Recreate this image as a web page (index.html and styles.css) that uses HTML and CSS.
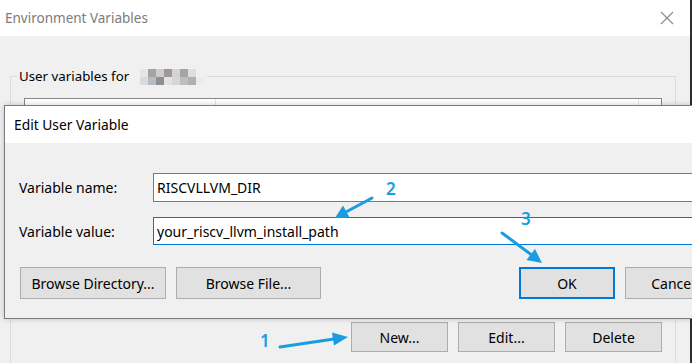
FILE: index.html
```html
<!DOCTYPE html>
<html lang="en">
<head>
    <meta charset="UTF-8">
    <title>Environment Variables</title>
    <link rel="stylesheet" href="styles.css">
</head>
<body>
    <div class="env-window">
        <div class="titlebar">
            <span class="title">Environment Variables</span>
            <svg class="close" width="14" height="14" viewBox="0 0 14 14">
                <path d="M1 1 L13 13 M13 1 L1 13" stroke="#8a8a8a" stroke-width="1.1" fill="none"/>
            </svg>
        </div>
        <div class="env-body">
            <div class="group">
                <div class="group-title">
                    <span>User variables for</span>
                    <!-- blurred user name -->
                    <span class="mosaic">
                        <i style="background:#f0f0f0"></i><i style="background:#e6e6e6"></i><i style="background:#a3a3a6"></i><i style="background:#cfcdcc"></i><i style="background:#a09896"></i><i style="background:#d3d3d3"></i><i style="background:#a2a6a8"></i><i style="background:#dedede"></i><i style="background:#f0f0f0"></i>
                        <i style="background:#f0f0f0"></i><i style="background:#dadada"></i><i style="background:#b8bcc2"></i><i style="background:#899194"></i><i style="background:#e4e2e0"></i><i style="background:#d6d6d6"></i><i style="background:#bdbdbd"></i><i style="background:#b0b0b0"></i><i style="background:#ececec"></i>
                    </span>
                </div>
                <div class="list">
                    <div class="list-head">
                        <div class="col-name"></div>
                        <div class="col-value"></div>
                        <div class="scroll-box"></div>
                    </div>
                </div>
                <div class="list-buttons">
                    <button class="btn">New...</button>
                    <button class="btn">Edit...</button>
                    <button class="btn">Delete</button>
                </div>
            </div>
        </div>
    </div>

    <div class="edit-dialog">
        <div class="dialog-title">Edit User Variable</div>
        <div class="dialog-body">
            <div class="field-row">
                <label class="field-label">Variable name:</label>
                <div class="text-box">RISCVLLVM_DIR</div>
            </div>
            <div class="field-row row-value">
                <label class="field-label">Variable value:</label>
                <div class="text-box focused">your_riscv_llvm_install_path</div>
            </div>
            <div class="dialog-buttons">
                <button class="btn btn-dir">Browse Directory...</button>
                <button class="btn btn-file">Browse File...</button>
                <button class="btn btn-ok">OK</button>
                <button class="btn btn-cancel">Cancel</button>
            </div>
        </div>
    </div>

    <!-- step annotations -->
    <svg class="annotations" width="692" height="363" viewBox="0 0 692 363">
        <g stroke="#1a9de0" stroke-width="3" stroke-linecap="round" fill="none">
            <line x1="372" y1="198" x2="345" y2="212.5"/>
            <line x1="502" y1="233" x2="531" y2="254.5"/>
            <line x1="280" y1="347" x2="334" y2="339"/>
        </g>
        <g fill="#1a9de0">
            <polygon points="335,218 349.5,217.5 343,205.5"/>
            <polygon points="542,263 526.5,260 535,249"/>
            <polygon points="348,337 334,345.5 332,332.5"/>
        </g>
        <g class="step-num" fill="#1a9de0">
            <text x="386" y="195">2</text>
            <text x="521" y="225">3</text>
            <text x="260" y="347">1</text>
        </g>
    </svg>
</body>
</html>
```

FILE: styles.css
```css
body {
    margin: 0;
    width: 692px;
    height: 363px;
    overflow: hidden;
    position: relative;
    font-family: "Noto Sans", "Open Sans", sans-serif;
    font-size: 14px;
    color: #000;
}

/* background window */
.env-window {
    height: 363px;
    overflow: hidden;
    box-sizing: border-box;
    background-color: #f0f0f0;
    border-right: 2px solid #2e2e2e;
}

.titlebar {
    height: 36px;
    background-color: #fff;
    display: flex;
    align-items: center;
    padding-left: 5px;
    padding-right: 16px;
}

.title {
    color: #7b7b7b;
    font-size: 13.5px;
    flex: 1;
}

.env-body {
    padding: 40px 0 0 10px;
}

.group {
    width: 666px;
    box-sizing: border-box;
    border: 1px solid #dcdcdc;
    padding: 0 13px 12px 13px;
}

.group-title {
    display: flex;
    align-items: center;
    width: fit-content;
    height: 20px;
    margin-top: -11px;
    margin-left: -7px;
    padding: 0 3px 0 2px;
    background-color: #f0f0f0;
    font-size: 13.3px;
}

.mosaic {
    display: grid;
    grid-template-columns: repeat(9, 8px);
    grid-template-rows: repeat(2, 8px);
    margin-left: 3px;
    margin-top: 2px;
}

.mosaic i {
    display: block;
}

.list {
    margin-top: 12px;
    height: 202px;
    box-sizing: border-box;
    border: 1px solid #828790;
    background-color: #fff;
}

.list-head {
    display: flex;
    height: 22px;
}

.col-name {
    width: 190px;
    border-right: 1px solid #e5e5e5;
}

.col-value {
    flex: 1;
}

.scroll-box {
    width: 22px;
    border-left: 1px solid #e5e5e5;
    border-bottom: 1px solid #e5e5e5;
}

.list-buttons {
    display: flex;
    justify-content: flex-end;
    gap: 10px;
    margin-top: 22px;
}

.btn {
    height: 30px;
    box-sizing: border-box;
    background-color: #e1e1e1;
    border: 1px solid #adadad;
    font-family: "Noto Sans", "Open Sans", sans-serif;
    font-size: 14px;
    color: #000;
    padding: 0;
}

.list-buttons .btn {
    width: 97px;
}

/* edit dialog on top */
.edit-dialog {
    position: absolute;
    left: 4px;
    top: 105px;
    width: 720px;
    height: 214px;
    box-sizing: border-box;
    border: 1px solid #7a7a7a;
    background-color: #f0f0f0;
    box-shadow: 0 0 6px rgba(0, 0, 0, 0.2);
}

.dialog-title {
    height: 37px;
    background-color: #fff;
    display: flex;
    align-items: center;
    padding-left: 9px;
    font-size: 13.8px;
}

.dialog-body {
    padding: 30px 0 0 14px;
}

.field-row {
    display: flex;
    align-items: center;
    height: 29px;
}

.row-value {
    height: 28px;
    margin-top: 15px;
}

.field-label {
    width: 134px;
}

.text-box {
    width: 560px;
    height: 100%;
    box-sizing: border-box;
    border: 1px solid #7a7a7a;
    background-color: #fff;
    padding-left: 3px;
    display: flex;
    align-items: center;
}

.text-box.focused {
    border-color: #0078d7;
}

.dialog-buttons {
    display: flex;
    margin-top: 22px;
}

.dialog-buttons .btn {
    height: 32px;
}

.btn-dir {
    width: 146px;
    margin-left: 1px;
}

.btn-file {
    width: 145px;
    margin-left: 10px;
}

.btn-ok {
    width: 96px;
    margin-left: 198px;
    border: 2px solid #0078d7 !important;
}

.btn-cancel {
    width: 96px;
    margin-left: 10px;
}

.annotations {
    position: absolute;
    left: 0;
    top: 0;
}

.step-num text {
    font-family: "Noto Sans", sans-serif;
    font-size: 17px;
    font-weight: 600;
}
```
